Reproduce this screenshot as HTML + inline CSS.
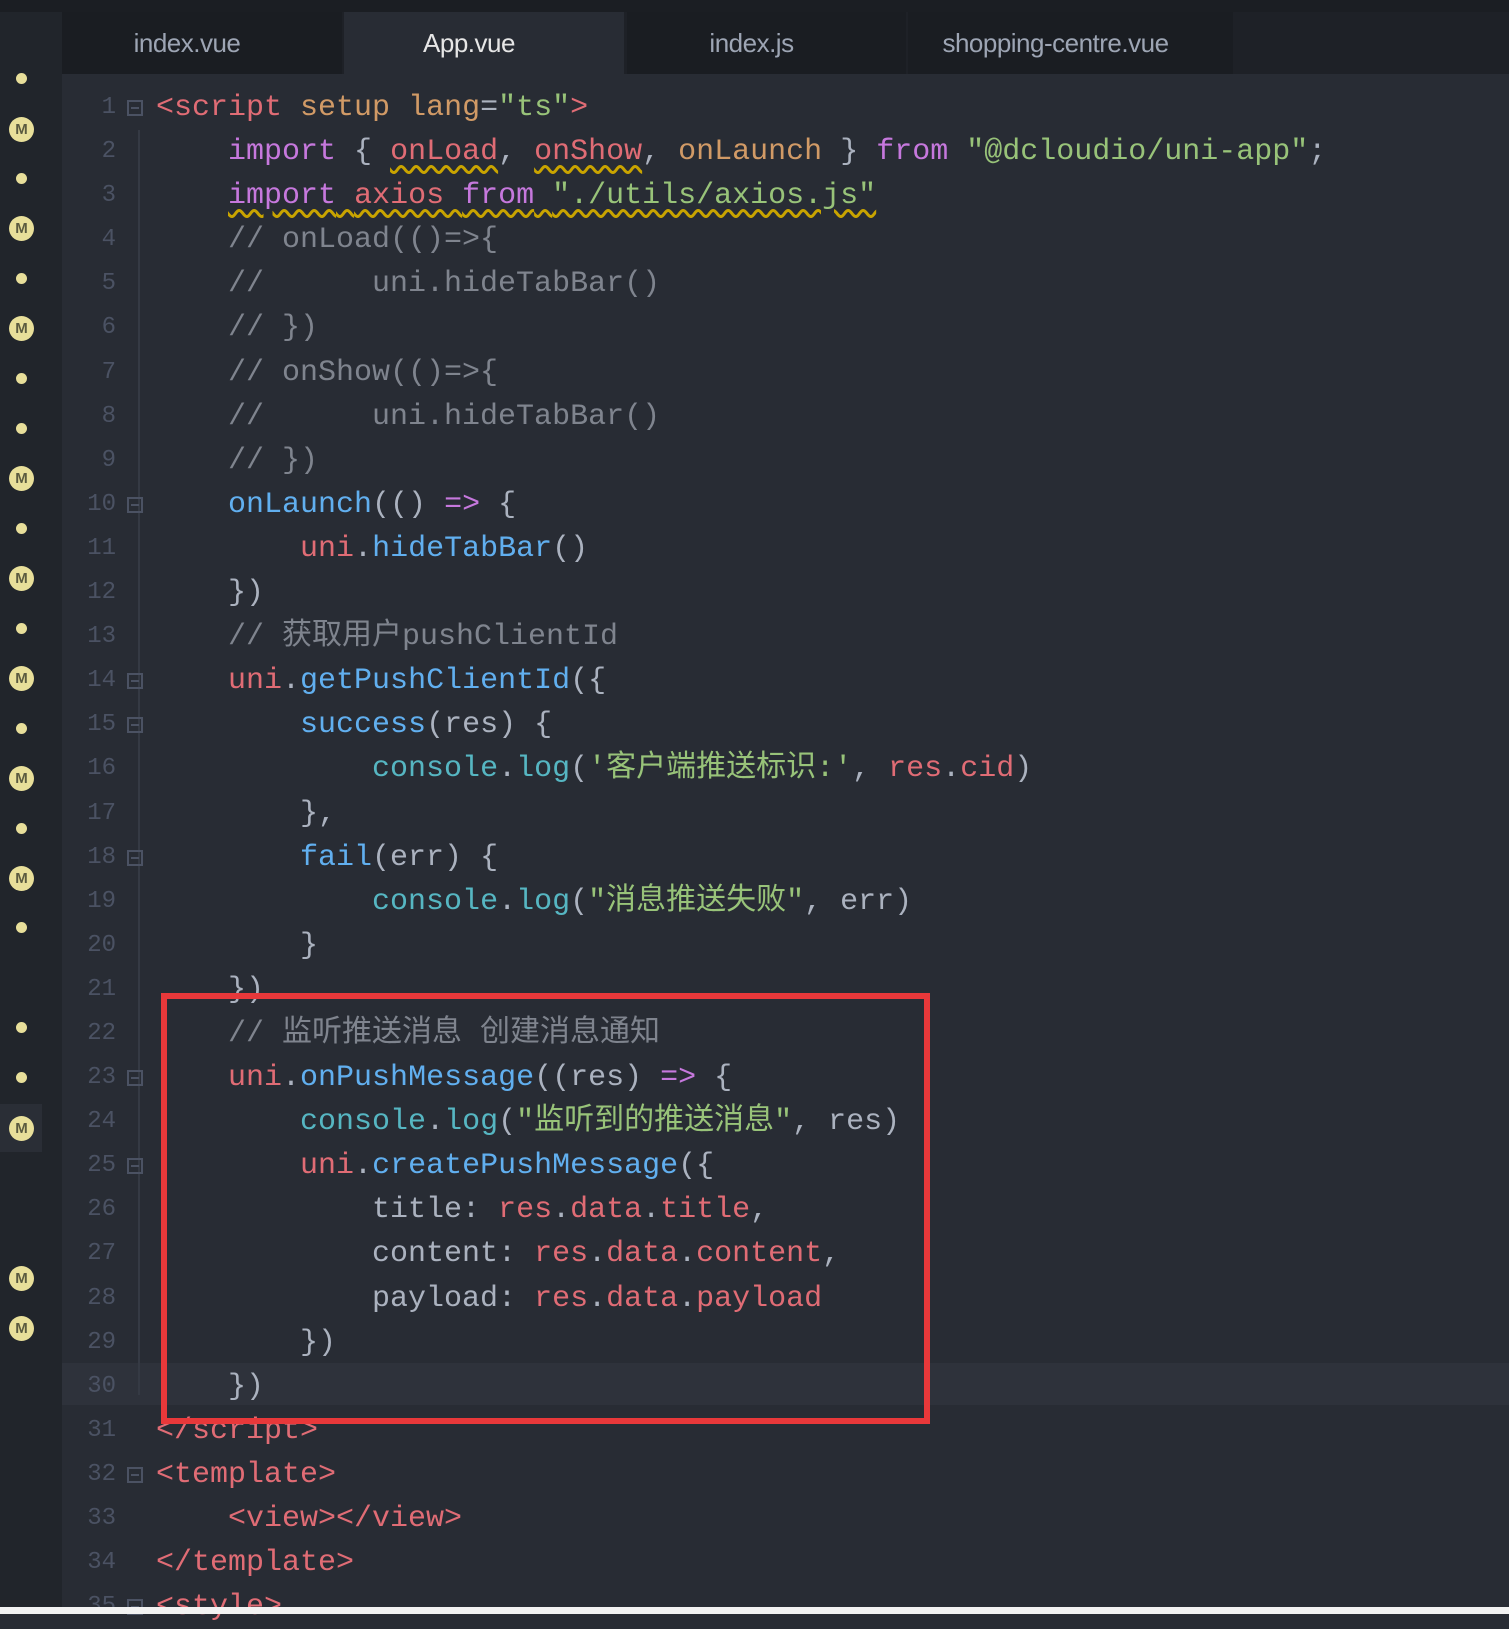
<!DOCTYPE html>
<html><head><meta charset="utf-8"><style>
*{margin:0;padding:0;box-sizing:border-box}
body{width:1509px;height:1614px;background:#282c34;overflow:hidden;position:relative;font-family:"Liberation Mono","Noto Sans CJK SC",monospace}
.side{position:absolute;left:0;top:0;width:62px;height:1614px;background:#21252b}
.top{position:absolute;left:0;top:0;width:1509px;height:12px;background:#1b1e23}
.tabs{position:absolute;left:62px;top:12px;width:1447px;height:62px;background:#1e2127}
.tab{position:absolute;top:0;height:62px;background:#1a1d22;color:#9da5b4;font:26px "Liberation Sans",sans-serif;text-align:center;line-height:62px;letter-spacing:-0.5px;padding-right:30px}
.tab.act{background:#282c34;color:#e6e6e6}
.dot{position:absolute;left:16px;width:11px;height:11px;border-radius:50%;background:#e8df9a}
.m{position:absolute;left:9px;width:25px;height:25px;border-radius:50%;background:#e8df9a;color:#5a5a40;font:bold 15px "Liberation Sans",sans-serif;text-align:center;line-height:25px}
.code{position:absolute;left:62px;top:86px;width:1447px}
.ln{height:44.1px;line-height:44.1px;font-size:30px;white-space:pre;position:relative;color:#abb2bf}
.num{position:absolute;left:0;width:54px;text-align:right;color:#4b5263;font-size:24px}
.txt{position:absolute;left:94px}
.fold{position:absolute;left:65px;top:14px;width:16px;height:16px;border:2px solid #4b5263}
.fold:after{content:"";position:absolute;left:2px;top:5px;width:8px;height:2px;background:#4b5263}
.r{color:#e06c75}.o{color:#d19a66}.g{color:#98c379}.p{color:#c678dd}.b{color:#61afef}.c{color:#56b6c2}.cm{color:#7f848e}
.u{text-decoration:underline wavy #c9a400;text-underline-offset:6px}
.guide{position:absolute;width:0;border-left:2px solid #353a44}
</style></head><body>
<div class="side"></div>
<div style="position:absolute;left:0;top:1104px;width:42px;height:48px;background:#2a2e36"></div>
<div class="top"></div>
<div class="tabs">
<div class="tab" style="left:0;width:280px">index.vue</div>
<div class="tab act" style="left:282px;width:280px">App.vue</div>
<div class="tab" style="left:565px;width:279px">index.js</div>
<div class="tab" style="left:846px;width:325px">shopping-centre.vue</div>
</div>
<div class="dot" style="top:73px"></div><div class="m" style="top:117px">M</div>
<div class="dot" style="top:173px"></div><div class="m" style="top:216px">M</div>
<div class="dot" style="top:273px"></div><div class="m" style="top:316px">M</div>
<div class="dot" style="top:373px"></div><div class="dot" style="top:423px"></div>
<div class="m" style="top:466px">M</div><div class="dot" style="top:523px"></div>
<div class="m" style="top:566px">M</div><div class="dot" style="top:623px"></div>
<div class="m" style="top:666px">M</div><div class="dot" style="top:723px"></div>
<div class="m" style="top:766px">M</div><div class="dot" style="top:823px"></div>
<div class="m" style="top:866px">M</div><div class="dot" style="top:922px"></div>
<div class="dot" style="top:1022px"></div><div class="dot" style="top:1072px"></div>
<div class="m" style="top:1116px">M</div>
<div class="m" style="top:1266px">M</div><div class="m" style="top:1316px">M</div>
<div style="position:absolute;left:62px;top:1363px;width:1447px;height:42px;background:#2e323b"></div>
<div class="guide" style="left:138px;top:130px;height:1265px"></div>
<div class="code">
<div class="ln"><span class="num">1</span><span class="fold"></span><span class="txt"><span class="r">&lt;script</span> <span class="o">setup</span> <span class="o">lang</span>=<span class="g">"ts"</span><span class="r">&gt;</span></span></div>
<div class="ln"><span class="num">2</span><span class="txt">    <span class="p">import</span> { <span class="r u">onLoad</span>, <span class="r u">onShow</span>, <span class="o">onLaunch</span> } <span class="p">from</span> <span class="g">"@dcloudio/uni-app"</span>;</span></div>
<div class="ln"><span class="num">3</span><span class="txt">    <span class="u"><span class="p">import</span> <span class="r">axios</span> <span class="p">from</span> <span class="g">"./utils/axios.js"</span></span></span></div>
<div class="ln"><span class="num">4</span><span class="txt cm">    // onLoad(()=>{</span></div>
<div class="ln"><span class="num">5</span><span class="txt cm">    //      uni.hideTabBar()</span></div>
<div class="ln"><span class="num">6</span><span class="txt cm">    // })</span></div>
<div class="ln"><span class="num">7</span><span class="txt cm">    // onShow(()=>{</span></div>
<div class="ln"><span class="num">8</span><span class="txt cm">    //      uni.hideTabBar()</span></div>
<div class="ln"><span class="num">9</span><span class="txt cm">    // })</span></div>
<div class="ln"><span class="num">10</span><span class="fold"></span><span class="txt">    <span class="b">onLaunch</span>(() <span class="p">=&gt;</span> {</span></div>
<div class="ln"><span class="num">11</span><span class="txt">        <span class="r">uni</span>.<span class="b">hideTabBar</span>()</span></div>
<div class="ln"><span class="num">12</span><span class="txt">    })</span></div>
<div class="ln"><span class="num">13</span><span class="txt cm">    // 获取用户pushClientId</span></div>
<div class="ln"><span class="num">14</span><span class="fold"></span><span class="txt">    <span class="r">uni</span>.<span class="b">getPushClientId</span>({</span></div>
<div class="ln"><span class="num">15</span><span class="fold"></span><span class="txt">        <span class="b">success</span>(res) {</span></div>
<div class="ln"><span class="num">16</span><span class="txt">            <span class="c">console</span>.<span class="c">log</span>(<span class="g">'客户端推送标识:'</span>, <span class="r">res</span>.<span class="r">cid</span>)</span></div>
<div class="ln"><span class="num">17</span><span class="txt">        },</span></div>
<div class="ln"><span class="num">18</span><span class="fold"></span><span class="txt">        <span class="b">fail</span>(err) {</span></div>
<div class="ln"><span class="num">19</span><span class="txt">            <span class="c">console</span>.<span class="c">log</span>(<span class="g">"消息推送失败"</span>, err)</span></div>
<div class="ln"><span class="num">20</span><span class="txt">        }</span></div>
<div class="ln"><span class="num">21</span><span class="txt">    })</span></div>
<div class="ln"><span class="num">22</span><span class="txt cm">    // 监听推送消息 创建消息通知</span></div>
<div class="ln"><span class="num">23</span><span class="fold"></span><span class="txt">    <span class="r">uni</span>.<span class="b">onPushMessage</span>((res) <span class="p">=&gt;</span> {</span></div>
<div class="ln"><span class="num">24</span><span class="txt">        <span class="c">console</span>.<span class="c">log</span>(<span class="g">"监听到的推送消息"</span>, res)</span></div>
<div class="ln"><span class="num">25</span><span class="fold"></span><span class="txt">        <span class="r">uni</span>.<span class="b">createPushMessage</span>({</span></div>
<div class="ln"><span class="num">26</span><span class="txt">            title: <span class="r">res</span>.<span class="r">data</span>.<span class="r">title</span>,</span></div>
<div class="ln"><span class="num">27</span><span class="txt">            content: <span class="r">res</span>.<span class="r">data</span>.<span class="r">content</span>,</span></div>
<div class="ln"><span class="num">28</span><span class="txt">            payload: <span class="r">res</span>.<span class="r">data</span>.<span class="r">payload</span></span></div>
<div class="ln"><span class="num">29</span><span class="txt">        })</span></div>
<div class="ln"><span class="num">30</span><span class="txt">    })</span></div>
<div class="ln"><span class="num">31</span><span class="txt r">&lt;/script&gt;</span></div>
<div class="ln"><span class="num">32</span><span class="fold"></span><span class="txt r">&lt;template&gt;</span></div>
<div class="ln"><span class="num">33</span><span class="txt r">    &lt;view&gt;&lt;/view&gt;</span></div>
<div class="ln"><span class="num">34</span><span class="txt r">&lt;/template&gt;</span></div>
<div class="ln"><span class="num">35</span><span class="fold"></span><span class="txt r">&lt;style&gt;</span></div>
</div>
<div style="position:absolute;left:161px;top:993px;width:769px;height:431px;border:6px solid #e8383a"></div>
<div style="position:absolute;left:0;top:1607px;width:1509px;height:7px;background:#f2f2f2"></div>
</body></html>
